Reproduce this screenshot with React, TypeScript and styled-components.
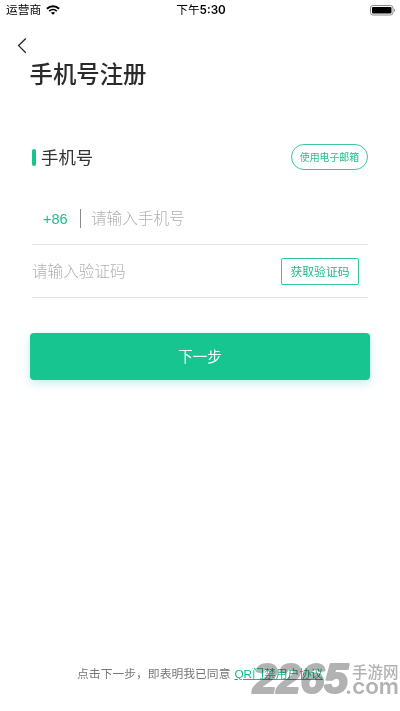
import React from "react";
import styled, { createGlobalStyle } from "styled-components";

const cjk = '"Noto Sans CJK SC", sans-serif';

const GlobalStyle = createGlobalStyle`
  * { box-sizing: border-box; }
  body { margin: 0; background: #fff; }
  button, input { font-family: inherit; margin: 0; padding: 0; }
`;

const Screen = styled.main`
  position: relative;
  display: flex;
  flex-direction: column;
  width: 400px;
  height: 711px;
  overflow: hidden;
  background: #fff;
  color: #2b2b2b;
  font-family: "Liberation Sans", ${cjk};
  white-space: nowrap;
`;

const StatusBar = styled.div`
  display: grid;
  grid-template-columns: 1fr auto 1fr;
  align-items: center;
  height: 20px;
  padding: 0 4px 0 6px;
  color: #000;
  font-size: 11.7px;
  line-height: 20px;
`;

const Carrier = styled.div`
  display: flex;
  align-items: center;
  gap: 5px;
`;

const Clock = styled.div`
  font-family: Inter, ${cjk};
  font-size: 11.7px;
  font-weight: 400;

  b {
    font-weight: 600;
  }
`;

const BatteryIcon = styled.svg`
  justify-self: end;
`;

const Header = styled.header`
  display: flex;
  flex-direction: column;
  padding: 17px 0 0 17px;
`;

const BackButton = styled.button`
  display: flex;
  width: 10px;
  height: 17px;
  border: 0;
  background: none;
`;

const Title = styled.h1`
  margin: 4px 0 0 12.5px;
  height: 34px;
  font-size: 23.4px;
  font-weight: 500;
  line-height: 34px;
  color: #2a2a2a;
`;

const SectionRow = styled.div`
  display: flex;
  align-items: center;
  height: 26px;
  margin: 52px 32px 0 32px;
`;

const Marker = styled.span`
  width: 4px;
  height: 17px;
  border-radius: 2px;
  background: #16c48e;
`;

const SectionTitle = styled.h2`
  flex: 1;
  margin: 0 0 0 5px;
  padding-top: 2px;
  font-size: 17.4px;
  font-weight: 400;
  line-height: 26px;
  color: #333;
`;

const EmailButton = styled.button`
  width: 77px;
  height: 26px;
  padding-top: 1px;
  border: 1px solid #38c79b;
  border-radius: 13px;
  background: #fff;
  color: #25bd8e;
  font-size: 9.9px;
  line-height: 23px;
`;

const Field = styled.div<{ $height: number; $top?: number }>`
  display: flex;
  align-items: center;
  height: ${(p) => p.$height}px;
  margin: 0 32px;
  padding-top: ${(p) => p.$top ?? 0}px;
  border-bottom: 1px solid #e3e3e3;
`;

const CountryCode = styled.span`
  width: 37px;
  margin-left: 11px;
  padding-top: 2px;
  color: #20bd8d;
  font-size: 14.5px;
  line-height: 20px;
`;

const Divider = styled.span`
  width: 1px;
  height: 19px;
  margin-right: 10px;
  background: #8a8a8a;
`;

const TextInput = styled.input`
  flex: 1;
  min-width: 0;
  height: 28px;
  padding-top: 2px;
  border: 0;
  outline: 0;
  background: none;
  font-size: 15.6px;
  font-weight: 300;
  &::placeholder { color: #b0b0b0; opacity: 1; }
`;

const CodeButton = styled.button`
  width: 78px;
  height: 27px;
  margin-right: 9px;
  padding-top: 1px;
  border: 1px solid #38c39a;
  border-radius: 2px;
  background: #fff;
  color: #20b98a;
  font-size: 11.8px;
  line-height: 24px;
`;

const NextButton = styled.button`
  height: 47px;
  margin: 35px 30px 0;
  padding-top: 1px;
  border: 0;
  border-radius: 4px;
  background: #16c58f;
  box-shadow: 0 3px 10px rgba(22, 197, 170, 0.28);
  color: #fff;
  font-size: 14.5px;
  line-height: 46px;
`;

const Agreement = styled.footer`
  margin-top: auto;
  margin-bottom: 27px;
  height: 20px;
  text-align: center;
  font-size: 11.8px;
  line-height: 20px;
  color: #777;
`;

const AgreementLink = styled.a`
  margin-left: 4px;
  color: #12b886;
  text-decoration: underline;
  text-underline-offset: 1px;
`;

const Watermark = styled.svg`
  position: absolute;
  left: 248px;
  top: 655px;
  mix-blend-mode: multiply;
  pointer-events: none;
`;

export default function App() {
  return (
    <>
      <GlobalStyle />
      <Screen>
        <StatusBar>
          <Carrier>
            <span>运营商</span>
            <svg width="14" height="10" viewBox="0 0 14 10" fill="none" stroke="#000">
              <path d="M.9 3.7C4.4.4 9.6.4 13.1 3.7" strokeWidth="2" />
              <path d="M3.2 6.1c2.2-2 5.4-2 7.6 0" strokeWidth="1.8" />
              <path d="M4.9 7.7c1.2-1.1 3-1.1 4.2 0L7 9.8Z" fill="#000" stroke="none" />
            </svg>
          </Carrier>
          <Clock>下午<b>5:30</b></Clock>
          <BatteryIcon width="26" height="11" viewBox="0 0 26 11">
            <rect x=".5" y=".5" width="22.5" height="9.5" rx="2.4" fill="#fff" stroke="#888" />
            <rect x="2" y="2" width="19.5" height="6.6" rx="1" fill="#000" />
            <path d="M24.2 3.6c1.3.5 1.3 2.8 0 3.3Z" fill="#888" />
          </BatteryIcon>
        </StatusBar>

        <Header>
          <BackButton aria-label="返回">
            <svg width="10" height="17" viewBox="0 0 10 17" fill="none" stroke="#222" strokeWidth="1.3">
              <path d="M8.8 1.5 1.6 8.6l7.2 7.2" />
            </svg>
          </BackButton>
          <Title>手机号注册</Title>
        </Header>

        <SectionRow>
          <Marker />
          <SectionTitle>手机号</SectionTitle>
          <EmailButton>使用电子邮箱</EmailButton>
        </SectionRow>

        <Field $height={75} $top={22}>
          <CountryCode>+86</CountryCode>
          <Divider />
          <TextInput placeholder="请输入手机号" />
        </Field>
        <Field $height={53}>
          <TextInput placeholder="请输入验证码" />
          <CodeButton>获取验证码</CodeButton>
        </Field>

        <NextButton>下一步</NextButton>

        <Agreement>
          点击下一步，即表明我已同意
          <AgreementLink>QR门禁用户协议</AgreementLink>
        </Agreement>

        <Watermark width="152" height="48" viewBox="0 0 152 48" fill="#b2b2b2">
          <text x="5" y="37.5" fontFamily="Liberation Sans, sans-serif" fontSize="42" fontWeight="700" fontStyle="italic" textLength="95" lengthAdjust="spacingAndGlyphs" stroke="#b2b2b2" strokeWidth="2.2" strokeLinejoin="round">2265</text>
          <text x="104" y="22.5" fontFamily={cjk} fontSize="15.5" fontWeight="500">手游网</text>
          <text x="97" y="38.5" fontFamily="Inter, sans-serif" fontSize="22" fontWeight="600" textLength="54" lengthAdjust="spacingAndGlyphs">.com</text>
        </Watermark>
      </Screen>
    </>
  );
}
